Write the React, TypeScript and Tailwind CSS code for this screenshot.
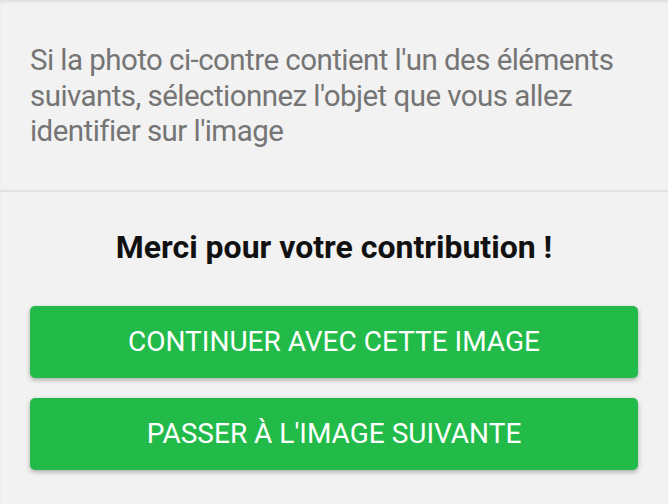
import React from 'react';

const font = { fontFamily: 'Roboto, "Noto Sans", sans-serif' };

export default function App() {
  return (
    <div
      className="w-[668px] h-[504px] bg-[#f2f2f2] shadow-[inset_0_3px_4px_-2px_rgba(0,0,0,0.12)] overflow-hidden"
      style={font}
    >
      <div className="px-[30px] pt-[43px] h-[192px] border-b-2 border-[#e2e2e2]">
        <p className="text-[29.5px] leading-[35.5px] tracking-[-0.55px] text-[#757575]">
          Si la photo ci-contre contient l'un des éléments suivants, sélectionnez l'objet que vous allez
          identifier sur l'image
        </p>
      </div>
      <div className="px-[30px] pt-[36px] flex flex-col">
        <h2 className="text-center text-[32px] leading-[38px] font-bold text-[#111]">
          Merci pour votre contribution !
        </h2>
        <div className="mt-[40px] flex flex-col gap-[20px]">
          <button className="h-[72px] w-full rounded-[5px] bg-[#22bb4a] text-white text-[28px] uppercase shadow-[0_2px_5px_rgba(0,0,0,0.3)]">
            Continuer avec cette image
          </button>
          <button className="h-[72px] w-full rounded-[5px] bg-[#22bb4a] text-white text-[28px] uppercase shadow-[0_2px_5px_rgba(0,0,0,0.3)]">
            Passer à l'image suivante
          </button>
        </div>
      </div>
    </div>
  );
}
